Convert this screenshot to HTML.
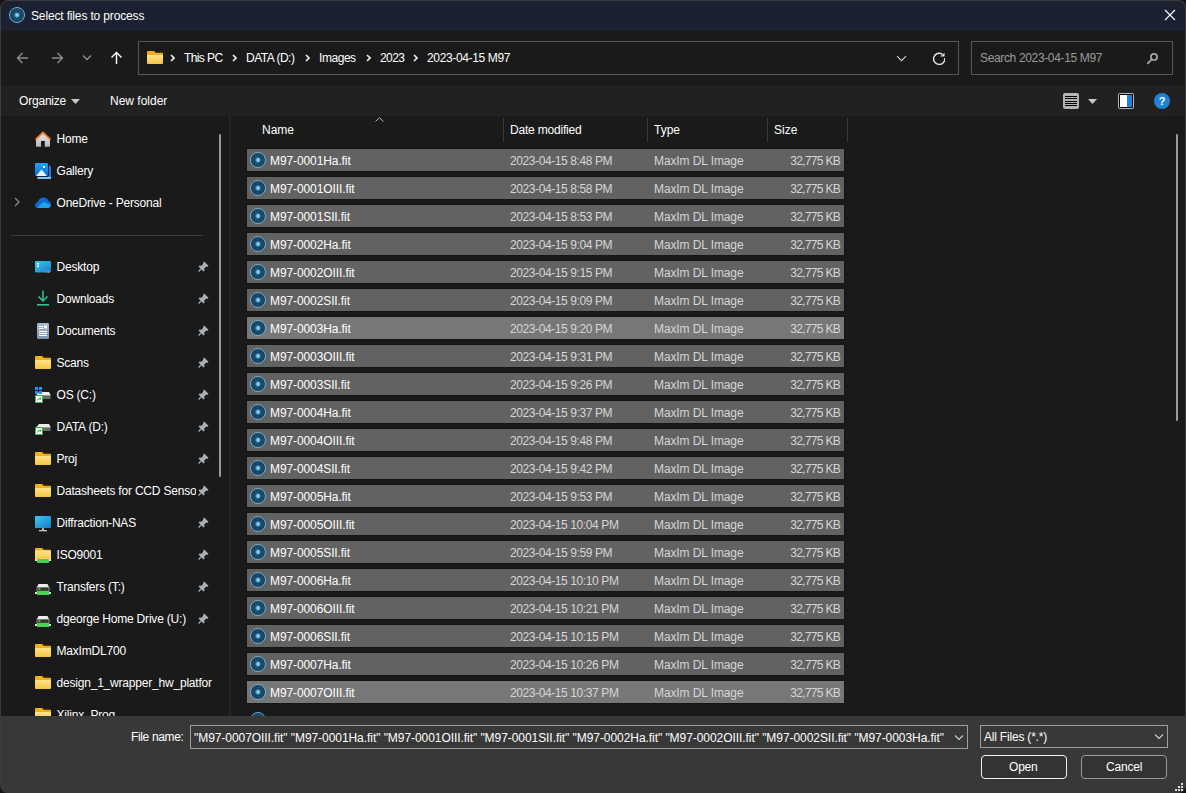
<!DOCTYPE html>
<html><head><meta charset="utf-8"><style>
html,body{margin:0;padding:0;}
body{width:1186px;height:793px;overflow:hidden;background:#141414;position:relative;font-family:"Liberation Sans", sans-serif;}
.r{position:absolute;}
.t{position:absolute;white-space:pre;line-height:normal;font-family:"Liberation Sans", sans-serif;}
#win{position:absolute;left:0;top:0;width:1186px;height:793px;border-radius:8px;overflow:hidden;background:#3c3c3c;}
</style></head><body>
<svg width="0" height="0" style="position:absolute"><defs>
<linearGradient id="fg" x1="0" y1="0" x2="0" y2="1"><stop offset="0" stop-color="#ffe58a"/><stop offset="1" stop-color="#f6c445"/></linearGradient>
<linearGradient id="dg" x1="0" y1="0" x2="1" y2="1"><stop offset="0" stop-color="#3cc8f0"/><stop offset="1" stop-color="#1a7ccc"/></linearGradient>
</defs></svg>
<div id="win">

<div class="r" style="left:1px;top:1px;width:1184px;height:30px;background:#1b2130;border-radius:7px 7px 0 0;"></div>
<div class="r" style="left:9px;top:7px;width:16px;height:16px;border-radius:50%;box-sizing:border-box;border:1.2px solid #6ab4dc;background:radial-gradient(circle at 50% 50%, #a8e4ff 0, #80ccf2 1.1px, #3a86b4 2.2px, #1a4966 3.3px, #173f5a 4.3px, #235677 5.1px, #153951 6.2px);"></div>
<div class="t" style="left:31px;top:9px;color:#ffffff;font-size:12px;letter-spacing:-0.15px;">Select files to process</div>
<svg class="r" style="left:1164px;top:9px" width="12" height="12" viewBox="0 0 12 12"><path d="M1 1L11 11M11 1L1 11" stroke="#ffffff" stroke-width="1.1"/></svg>
<div class="r" style="left:1px;top:31px;width:1184px;height:55px;background:#1a1a1a;"></div>
<svg class="r" style="left:16px;top:52px" width="13" height="12" viewBox="0 0 13 12"><path d="M12 6H1.5M6.5 1L1.5 6L6.5 11" stroke="#8f8f8f" stroke-width="1.4" fill="none"/></svg>
<svg class="r" style="left:51px;top:52px" width="13" height="12" viewBox="0 0 13 12"><path d="M1 6H11.5M6.5 1L11.5 6L6.5 11" stroke="#8f8f8f" stroke-width="1.4" fill="none"/></svg>
<svg class="r" style="left:82px;top:54px" width="11" height="7" viewBox="0 0 11 7"><path d="M1 1.5L5 5.5L9 1.5" stroke="#8f8f8f" stroke-width="1.4" fill="none"/></svg>
<svg class="r" style="left:110px;top:51px" width="13" height="13" viewBox="0 0 13 13"><path d="M6.5 13V1.5M1.5 6.5L6.5 1.5L11.5 6.5" stroke="#ffffff" stroke-width="1.4" fill="none"/></svg>
<div class="r" style="left:138px;top:41px;width:821px;height:34px;background:#1a1a1a;box-sizing:border-box;border:1px solid #575757;"></div>
<svg class="r" style="left:147px;top:50px" width="16" height="14" viewBox="0 0 16 14"><path d="M0 2 Q0 1 1 1 H7.2 L8.6 2.7 H15 Q16 2.7 16 3.7 V7 H0 Z" fill="#efb01a"/><rect x="0" y="5" width="16" height="9" rx="1" fill="url(#fg)"/></svg>
<svg class="r" style="left:170px;top:54px" width="5" height="8" viewBox="0 0 5 8"><path d="M1 1L4 4L1 7" stroke="#f0f0f0" stroke-width="1.6" fill="none"/></svg>
<svg class="r" style="left:232px;top:54px" width="5" height="8" viewBox="0 0 5 8"><path d="M1 1L4 4L1 7" stroke="#f0f0f0" stroke-width="1.6" fill="none"/></svg>
<svg class="r" style="left:305px;top:54px" width="5" height="8" viewBox="0 0 5 8"><path d="M1 1L4 4L1 7" stroke="#f0f0f0" stroke-width="1.6" fill="none"/></svg>
<svg class="r" style="left:366px;top:54px" width="5" height="8" viewBox="0 0 5 8"><path d="M1 1L4 4L1 7" stroke="#f0f0f0" stroke-width="1.6" fill="none"/></svg>
<svg class="r" style="left:413px;top:54px" width="5" height="8" viewBox="0 0 5 8"><path d="M1 1L4 4L1 7" stroke="#f0f0f0" stroke-width="1.6" fill="none"/></svg>
<div class="t" style="left:184px;top:51px;color:#ffffff;font-size:12px;letter-spacing:-0.6px;">This PC</div>
<div class="t" style="left:246px;top:51px;color:#ffffff;font-size:12px;letter-spacing:-0.5px;">DATA (D:)</div>
<div class="t" style="left:319px;top:51px;color:#ffffff;font-size:12px;letter-spacing:-0.45px;">Images</div>
<div class="t" style="left:380px;top:51px;color:#ffffff;font-size:12px;letter-spacing:-0.6px;">2023</div>
<div class="t" style="left:427px;top:51px;color:#ffffff;font-size:12px;letter-spacing:-0.35px;">2023-04-15 M97</div>
<svg class="r" style="left:896px;top:55px" width="11" height="7" viewBox="0 0 11 7"><path d="M1 1.2L5.5 5.7L10 1.2" stroke="#d0d0d0" stroke-width="1.1" fill="none"/></svg>
<svg class="r" style="left:932px;top:52px" width="13" height="13" viewBox="0 0 13 13"><path d="M10.17 2.05A5.6 5.6 0 1 0 12.75 6.02" stroke="#e6e6e6" stroke-width="1.4" fill="none"/><path d="M8.1 4.5L12.5 0.7L12.5 4.5Z" fill="#e6e6e6"/></svg>
<div class="r" style="left:971px;top:41px;width:202px;height:34px;background:#1a1a1a;box-sizing:border-box;border:1px solid #575757;"></div>
<div class="t" style="left:980px;top:51px;color:#9a9a9a;font-size:12px;letter-spacing:-0.35px;">Search 2023-04-15 M97</div>
<svg class="r" style="left:1145px;top:51px" width="14" height="14" viewBox="0 0 14 14"><circle cx="9" cy="5.9" r="3.1" stroke="#a6a6a6" stroke-width="1.7" fill="none"/><path d="M7 8.1L2.3 12.8" stroke="#a6a6a6" stroke-width="1.8"/></svg>
<div class="r" style="left:1px;top:86px;width:1184px;height:30px;background:#212121;"></div>
<div class="t" style="left:19px;top:94px;color:#ffffff;font-size:12px;letter-spacing:-0.2px;">Organize</div>
<svg class="r" style="left:71px;top:99px" width="9" height="5" viewBox="0 0 9 5"><path d="M0 0H9L4.5 5Z" fill="#c8c8c8"/></svg>
<div class="t" style="left:110px;top:94px;color:#ffffff;font-size:12px;letter-spacing:0px;">New folder</div>
<svg class="r" style="left:1063px;top:93px" width="16" height="16" viewBox="0 0 16 16"><rect x="0" y="0" width="16" height="16" rx="2" fill="#b4b4b4"/><rect x="2" y="3" width="12" height="1" fill="#000"/><rect x="2" y="5" width="12" height="1" fill="#000"/><rect x="2" y="8" width="12" height="1" fill="#000"/><rect x="2" y="10" width="12" height="1" fill="#000"/><rect x="2" y="12" width="12" height="1" fill="#000"/></svg>
<svg class="r" style="left:1088px;top:99px" width="9" height="5" viewBox="0 0 9 5"><path d="M0 0H9L4.5 5Z" fill="#c8c8c8"/></svg>
<svg class="r" style="left:1118px;top:93px" width="16" height="16" viewBox="0 0 16 16"><rect x="0" y="0" width="16" height="16" rx="2" fill="#b4b4b4"/><rect x="1" y="1" width="14" height="14" rx="1" fill="#000"/><rect x="2" y="2" width="7" height="12" fill="#fff"/><rect x="9" y="2" width="5" height="12" fill="#1a86e0"/></svg>
<svg class="r" style="left:1154px;top:93px" width="16" height="16" viewBox="0 0 16 16"><circle cx="8" cy="8" r="8" fill="#1d82d8"/><text x="8" y="12.2" text-anchor="middle" font-family="Liberation Sans" font-weight="bold" font-size="11" fill="#fff">?</text></svg>
<div class="r" style="left:1px;top:116px;width:1184px;height:600px;background:#1a1a1a;"></div>
<div class="r" style="left:229px;top:116px;width:2px;height:600px;background:#262626;"></div>
<div class="r" style="left:1168px;top:116px;width:17px;height:600px;background:#191919;"></div>
<div class="r" style="left:1px;top:116px;width:216px;height:600px;overflow:hidden">
<div class="t" style="left:55.5px;top:16px;color:#ffffff;font-size:12px;letter-spacing:-0.2px;">Home</div>
<div class="t" style="left:55.5px;top:48px;color:#ffffff;font-size:12px;letter-spacing:-0.2px;">Gallery</div>
<div class="t" style="left:55.5px;top:80px;color:#ffffff;font-size:12px;letter-spacing:-0.2px;">OneDrive - Personal</div>
<div class="t" style="left:55.5px;top:144px;color:#ffffff;font-size:12px;letter-spacing:-0.2px;">Desktop</div>
<div class="t" style="left:55.5px;top:176px;color:#ffffff;font-size:12px;letter-spacing:-0.2px;">Downloads</div>
<div class="t" style="left:55.5px;top:208px;color:#ffffff;font-size:12px;letter-spacing:-0.2px;">Documents</div>
<div class="t" style="left:55.5px;top:240px;color:#ffffff;font-size:12px;letter-spacing:-0.2px;">Scans</div>
<div class="t" style="left:55.5px;top:272px;color:#ffffff;font-size:12px;letter-spacing:-0.2px;">OS (C:)</div>
<div class="t" style="left:55.5px;top:304px;color:#ffffff;font-size:12px;letter-spacing:-0.2px;">DATA (D:)</div>
<div class="t" style="left:55.5px;top:336px;color:#ffffff;font-size:12px;letter-spacing:-0.2px;">Proj</div>
<div class="t" style="left:55.5px;top:368px;color:#ffffff;font-size:12px;letter-spacing:-0.2px;max-width:139px;overflow:hidden;">Datasheets for CCD Sensor</div>
<div class="t" style="left:55.5px;top:400px;color:#ffffff;font-size:12px;letter-spacing:-0.2px;">Diffraction-NAS</div>
<div class="t" style="left:55.5px;top:432px;color:#ffffff;font-size:12px;letter-spacing:-0.2px;">ISO9001</div>
<div class="t" style="left:55.5px;top:464px;color:#ffffff;font-size:12px;letter-spacing:-0.2px;">Transfers (T:)</div>
<div class="t" style="left:55.5px;top:496px;color:#ffffff;font-size:12px;letter-spacing:-0.2px;">dgeorge Home Drive (U:)</div>
<div class="t" style="left:55.5px;top:528px;color:#ffffff;font-size:12px;letter-spacing:-0.2px;">MaxImDL700</div>
<div class="t" style="left:55.5px;top:560px;color:#ffffff;font-size:12px;letter-spacing:-0.2px;">design_1_wrapper_hw_platfor</div>
<div class="t" style="left:55.5px;top:592px;color:#ffffff;font-size:12px;letter-spacing:-0.2px;">Xilinx_Prog</div>
</div>
<div class="r" style="left:11px;top:235px;width:192px;height:1px;background:#3a3a3a;"></div>
<div class="r" style="left:219px;top:134px;width:2px;height:343px;background:#9a9a9a;border-radius:1px;"></div>
<svg class="r" style="left:14px;top:197px" width="6" height="10" viewBox="0 0 6 10"><path d="M1 1L5 5L1 9" stroke="#8a8a8a" stroke-width="1.2" fill="none"/></svg>
<svg class="r" style="left:198px;top:261px" width="11" height="11" viewBox="0 0 11 11"><path d="M6.2 0.5L10.5 4.8L9.3 6L8.2 5.6L6.2 7.6L6.6 9.6L5.5 10.5L0.5 5.5L1.4 4.4L3.4 4.8L5.4 2.8L5 1.7Z" fill="#a9b1b6"/><path d="M3 8L0.5 10.5" stroke="#a9b1b6" stroke-width="1.3"/></svg>
<svg class="r" style="left:198px;top:293px" width="11" height="11" viewBox="0 0 11 11"><path d="M6.2 0.5L10.5 4.8L9.3 6L8.2 5.6L6.2 7.6L6.6 9.6L5.5 10.5L0.5 5.5L1.4 4.4L3.4 4.8L5.4 2.8L5 1.7Z" fill="#a9b1b6"/><path d="M3 8L0.5 10.5" stroke="#a9b1b6" stroke-width="1.3"/></svg>
<svg class="r" style="left:198px;top:325px" width="11" height="11" viewBox="0 0 11 11"><path d="M6.2 0.5L10.5 4.8L9.3 6L8.2 5.6L6.2 7.6L6.6 9.6L5.5 10.5L0.5 5.5L1.4 4.4L3.4 4.8L5.4 2.8L5 1.7Z" fill="#a9b1b6"/><path d="M3 8L0.5 10.5" stroke="#a9b1b6" stroke-width="1.3"/></svg>
<svg class="r" style="left:198px;top:357px" width="11" height="11" viewBox="0 0 11 11"><path d="M6.2 0.5L10.5 4.8L9.3 6L8.2 5.6L6.2 7.6L6.6 9.6L5.5 10.5L0.5 5.5L1.4 4.4L3.4 4.8L5.4 2.8L5 1.7Z" fill="#a9b1b6"/><path d="M3 8L0.5 10.5" stroke="#a9b1b6" stroke-width="1.3"/></svg>
<svg class="r" style="left:198px;top:389px" width="11" height="11" viewBox="0 0 11 11"><path d="M6.2 0.5L10.5 4.8L9.3 6L8.2 5.6L6.2 7.6L6.6 9.6L5.5 10.5L0.5 5.5L1.4 4.4L3.4 4.8L5.4 2.8L5 1.7Z" fill="#a9b1b6"/><path d="M3 8L0.5 10.5" stroke="#a9b1b6" stroke-width="1.3"/></svg>
<svg class="r" style="left:198px;top:421px" width="11" height="11" viewBox="0 0 11 11"><path d="M6.2 0.5L10.5 4.8L9.3 6L8.2 5.6L6.2 7.6L6.6 9.6L5.5 10.5L0.5 5.5L1.4 4.4L3.4 4.8L5.4 2.8L5 1.7Z" fill="#a9b1b6"/><path d="M3 8L0.5 10.5" stroke="#a9b1b6" stroke-width="1.3"/></svg>
<svg class="r" style="left:198px;top:453px" width="11" height="11" viewBox="0 0 11 11"><path d="M6.2 0.5L10.5 4.8L9.3 6L8.2 5.6L6.2 7.6L6.6 9.6L5.5 10.5L0.5 5.5L1.4 4.4L3.4 4.8L5.4 2.8L5 1.7Z" fill="#a9b1b6"/><path d="M3 8L0.5 10.5" stroke="#a9b1b6" stroke-width="1.3"/></svg>
<svg class="r" style="left:198px;top:485px" width="11" height="11" viewBox="0 0 11 11"><path d="M6.2 0.5L10.5 4.8L9.3 6L8.2 5.6L6.2 7.6L6.6 9.6L5.5 10.5L0.5 5.5L1.4 4.4L3.4 4.8L5.4 2.8L5 1.7Z" fill="#a9b1b6"/><path d="M3 8L0.5 10.5" stroke="#a9b1b6" stroke-width="1.3"/></svg>
<svg class="r" style="left:198px;top:517px" width="11" height="11" viewBox="0 0 11 11"><path d="M6.2 0.5L10.5 4.8L9.3 6L8.2 5.6L6.2 7.6L6.6 9.6L5.5 10.5L0.5 5.5L1.4 4.4L3.4 4.8L5.4 2.8L5 1.7Z" fill="#a9b1b6"/><path d="M3 8L0.5 10.5" stroke="#a9b1b6" stroke-width="1.3"/></svg>
<svg class="r" style="left:198px;top:549px" width="11" height="11" viewBox="0 0 11 11"><path d="M6.2 0.5L10.5 4.8L9.3 6L8.2 5.6L6.2 7.6L6.6 9.6L5.5 10.5L0.5 5.5L1.4 4.4L3.4 4.8L5.4 2.8L5 1.7Z" fill="#a9b1b6"/><path d="M3 8L0.5 10.5" stroke="#a9b1b6" stroke-width="1.3"/></svg>
<svg class="r" style="left:198px;top:581px" width="11" height="11" viewBox="0 0 11 11"><path d="M6.2 0.5L10.5 4.8L9.3 6L8.2 5.6L6.2 7.6L6.6 9.6L5.5 10.5L0.5 5.5L1.4 4.4L3.4 4.8L5.4 2.8L5 1.7Z" fill="#a9b1b6"/><path d="M3 8L0.5 10.5" stroke="#a9b1b6" stroke-width="1.3"/></svg>
<svg class="r" style="left:198px;top:613px" width="11" height="11" viewBox="0 0 11 11"><path d="M6.2 0.5L10.5 4.8L9.3 6L8.2 5.6L6.2 7.6L6.6 9.6L5.5 10.5L0.5 5.5L1.4 4.4L3.4 4.8L5.4 2.8L5 1.7Z" fill="#a9b1b6"/><path d="M3 8L0.5 10.5" stroke="#a9b1b6" stroke-width="1.3"/></svg>
<svg class="r" style="left:35px;top:131px" width="16" height="16" viewBox="0 0 16 16"><defs><linearGradient id="hg" x1="0" y1="0" x2="0" y2="1"><stop offset="0" stop-color="#e6e6e6"/><stop offset="1" stop-color="#b9b9b9"/></linearGradient></defs><path d="M1 8 L8 1.5 L15 8 V14.8 Q15 15.8 14 15.8 H2 Q1 15.8 1 14.8 Z" fill="url(#hg)"/><rect x="6" y="10" width="3.8" height="6" fill="#1a1a1a"/><path d="M0.4 8.6 L8 1.4 L15.6 8.6" stroke="#f27812" stroke-width="1.7" fill="none"/></svg>
<svg class="r" style="left:35px;top:163px" width="17" height="17" viewBox="0 0 17 17"><defs><linearGradient id="gg" x1="0" y1="0" x2="0" y2="1"><stop offset="0" stop-color="#22a4f6"/><stop offset="1" stop-color="#0a6cd0"/></linearGradient></defs><rect x="2.5" y="2.5" width="13.5" height="13.5" rx="1.5" fill="#1a7ee0"/><rect x="2.5" y="14" width="13.5" height="2" fill="#86c4f2"/><rect x="-0.8" y="-0.8" width="14.6" height="14.6" rx="1.8" fill="#121212"/><rect x="0" y="0" width="13" height="13" rx="1.3" fill="url(#gg)"/><path d="M1 12.9 L6.5 6.6 L12 12.9 Z" fill="#e6f3ff"/><rect x="8" y="3" width="2" height="2" fill="#ffffff"/></svg>
<svg class="r" style="left:35px;top:197px" width="16" height="12" viewBox="0 0 16 12"><path d="M3 11 C1.3 11 0 9.8 0 8.2 C0 6.6 1.2 5.3 2.8 5.2 C3.4 2.4 5.8 0.5 8.5 0.5 C10.8 0.5 12.7 1.9 13.4 4 C15 4.5 16 5.9 16 7.5 C16 9.5 14.5 11 12.7 11 Z" fill="#0e6cd0"/><path d="M2.2 11 L7.3 5.8 Q9.6 4.6 11.8 6.2 L15.9 8.6 Q15.4 11 12.7 11 Z" fill="#22a2ee"/></svg>
<svg class="r" style="left:35px;top:261px" width="17" height="13" viewBox="0 0 17 13"><rect x="0" y="0" width="16" height="11.5" rx="1.2" fill="url(#dg)"/><rect x="2" y="2" width="2" height="1.5" fill="#fff"/><rect x="2" y="4.5" width="2" height="1.5" fill="#fff"/><rect x="11" y="10.5" width="1" height="1" fill="#cde"/><rect x="13" y="10.5" width="1" height="1" fill="#cde"/></svg>
<svg class="r" style="left:35px;top:290px" width="16" height="16" viewBox="0 0 16 16"><path d="M8 0.5V11M3.5 6.5L8 11L12.5 6.5" stroke="#2fc49a" stroke-width="1.5" fill="none"/><rect x="2" y="14" width="12" height="1.6" fill="#2fc49a"/></svg>
<svg class="r" style="left:35px;top:323px" width="16" height="16" viewBox="0 0 16 16"><defs><linearGradient id="docg" x1="0" y1="0" x2="0" y2="1"><stop offset="0" stop-color="#a9bdd0"/><stop offset="1" stop-color="#7c92a8"/></linearGradient></defs><rect x="2" y="0" width="12" height="16" rx="1.3" fill="url(#docg)"/><rect x="4" y="3" width="4" height="1" fill="#fff"/><rect x="4" y="5" width="4" height="1" fill="#fff"/><rect x="9" y="2.5" width="3" height="3" fill="#fff"/><rect x="4" y="8" width="8" height="1" fill="#fff"/><rect x="4" y="10" width="8" height="1" fill="#fff"/><rect x="4" y="12" width="8" height="1" fill="#fff"/></svg>
<svg class="r" style="left:35px;top:355px" width="16" height="14" viewBox="0 0 16 14"><path d="M0 2 Q0 1 1 1 H7.2 L8.6 2.7 H15 Q16 2.7 16 3.7 V7 H0 Z" fill="#efb01a"/><rect x="0" y="5" width="16" height="9" rx="1" fill="url(#fg)"/></svg>
<svg class="r" style="left:35px;top:451px" width="16" height="14" viewBox="0 0 16 14"><path d="M0 2 Q0 1 1 1 H7.2 L8.6 2.7 H15 Q16 2.7 16 3.7 V7 H0 Z" fill="#efb01a"/><rect x="0" y="5" width="16" height="9" rx="1" fill="url(#fg)"/></svg>
<svg class="r" style="left:35px;top:483px" width="16" height="14" viewBox="0 0 16 14"><path d="M0 2 Q0 1 1 1 H7.2 L8.6 2.7 H15 Q16 2.7 16 3.7 V7 H0 Z" fill="#efb01a"/><rect x="0" y="5" width="16" height="9" rx="1" fill="url(#fg)"/></svg>
<svg class="r" style="left:35px;top:643px" width="16" height="14" viewBox="0 0 16 14"><path d="M0 2 Q0 1 1 1 H7.2 L8.6 2.7 H15 Q16 2.7 16 3.7 V7 H0 Z" fill="#efb01a"/><rect x="0" y="5" width="16" height="9" rx="1" fill="url(#fg)"/></svg>
<svg class="r" style="left:35px;top:675px" width="16" height="14" viewBox="0 0 16 14"><path d="M0 2 Q0 1 1 1 H7.2 L8.6 2.7 H15 Q16 2.7 16 3.7 V7 H0 Z" fill="#efb01a"/><rect x="0" y="5" width="16" height="9" rx="1" fill="url(#fg)"/></svg>
<svg class="r" style="left:35px;top:707px" width="16" height="14" viewBox="0 0 16 14"><path d="M0 2 Q0 1 1 1 H7.2 L8.6 2.7 H15 Q16 2.7 16 3.7 V7 H0 Z" fill="#efb01a"/><rect x="0" y="5" width="16" height="9" rx="1" fill="url(#fg)"/></svg>
<svg class="r" style="left:35px;top:547px" width="16" height="16" viewBox="0 0 16 16"><path d="M0 2 Q0 1 1 1 H7.2 L8.6 2.7 H15 Q16 2.7 16 3.7 V7 H0 Z" fill="#efb01a"/><rect x="0" y="3.5" width="16" height="10.5" rx="1" fill="url(#fg)"/><rect x="0" y="12" width="16" height="2" fill="#e8e8e8"/><rect x="2" y="12" width="12" height="4" rx="0.6" fill="#44d052"/></svg>
<svg class="r" style="left:34px;top:386px" width="18" height="18" viewBox="0 0 18 18"><path d="M2.5 9 L5 6 H15 L16.5 9 Z" fill="#eeeeee"/><rect x="2.5" y="9" width="14" height="4" fill="#6a6a6a"/><rect x="2.5" y="9" width="14" height="1" fill="#9a9a9a"/><rect x="1" y="1" width="3" height="3" fill="#1a9af5"/><rect x="5" y="1" width="3" height="3" fill="#1a9af5"/><rect x="1" y="5" width="3" height="3" fill="#1a9af5"/><rect x="5" y="5" width="3" height="3" fill="#1a9af5"/><rect x="1" y="9" width="8" height="8" fill="#33b443"/><rect x="2" y="10" width="6" height="6" fill="#ffffff"/><path d="M3 15 Q3.2 12.2 6 12 V11 L7.6 12.6 L6 14.2 V13.2 Q4 13.3 3 15Z" fill="#33b443"/></svg>
<svg class="r" style="left:34px;top:418px" width="18" height="18" viewBox="0 0 18 18"><path d="M2.5 9 L5 6 H15 L16.5 9 Z" fill="#eeeeee"/><rect x="2.5" y="9" width="14" height="4" fill="#6a6a6a"/><rect x="2.5" y="9" width="14" height="1" fill="#9a9a9a"/><rect x="1" y="9" width="8" height="8" fill="#33b443"/><rect x="2" y="10" width="6" height="6" fill="#ffffff"/><path d="M3 15 Q3.2 12.2 6 12 V11 L7.6 12.6 L6 14.2 V13.2 Q4 13.3 3 15Z" fill="#33b443"/></svg>
<svg class="r" style="left:35px;top:516px" width="16" height="16" viewBox="0 0 16 16"><rect x="0" y="0" width="16" height="12" rx="0.8" fill="url(#dg)"/><rect x="7" y="12" width="2" height="2" fill="#b8b8b8"/><rect x="4" y="14" width="8" height="1.3" fill="#c8c8c8"/></svg>
<svg class="r" style="left:35px;top:583px" width="16" height="13" viewBox="0 0 16 13"><path d="M2 4 L3.5 1 H12.5 L14 4 Z" fill="#eeeeee"/><rect x="1.5" y="4" width="13" height="4.5" fill="#a0a0a0"/><rect x="2.3" y="4.6" width="11.4" height="3.2" fill="#353535"/><circle cx="4.5" cy="5.8" r="0.9" fill="#44ff44"/><rect x="0" y="9" width="16" height="2" fill="#dddddd"/><rect x="2" y="8" width="12" height="4" fill="#46d454"/></svg>
<svg class="r" style="left:35px;top:615px" width="16" height="13" viewBox="0 0 16 13"><path d="M2 4 L3.5 1 H12.5 L14 4 Z" fill="#eeeeee"/><rect x="1.5" y="4" width="13" height="4.5" fill="#a0a0a0"/><rect x="2.3" y="4.6" width="11.4" height="3.2" fill="#353535"/><circle cx="4.5" cy="5.8" r="0.9" fill="#44ff44"/><rect x="0" y="9" width="16" height="2" fill="#dddddd"/><rect x="2" y="8" width="12" height="4" fill="#46d454"/></svg>
<svg class="r" style="left:375px;top:117px" width="9" height="5" viewBox="0 0 9 5"><path d="M0.5 4.5L4.5 0.8L8.5 4.5" stroke="#bdbdbd" stroke-width="1" fill="none"/></svg>
<div class="r" style="left:503px;top:118px;width:1px;height:24px;background:#3a3a3a;"></div>
<div class="r" style="left:647px;top:118px;width:1px;height:24px;background:#3a3a3a;"></div>
<div class="r" style="left:767px;top:118px;width:1px;height:24px;background:#3a3a3a;"></div>
<div class="r" style="left:847px;top:118px;width:1px;height:24px;background:#3a3a3a;"></div>
<div class="t" style="left:262px;top:123px;color:#ffffff;font-size:12px;letter-spacing:0px;">Name</div>
<div class="t" style="left:510px;top:123px;color:#ffffff;font-size:12px;letter-spacing:-0.2px;">Date modified</div>
<div class="t" style="left:654px;top:123px;color:#ffffff;font-size:12px;letter-spacing:0px;">Type</div>
<div class="t" style="left:774px;top:123px;color:#ffffff;font-size:12px;letter-spacing:0px;">Size</div>
<div class="r" style="left:231px;top:116px;width:954px;height:600px;overflow:hidden">
<div class="r" style="left:16px;top:33px;width:597px;height:22px;background:#626262;box-shadow:0 0 0 1px #151515;"></div>
<div class="r" style="left:19px;top:36px;width:16px;height:16px;border-radius:50%;box-sizing:border-box;border:1.2px solid #6ab4dc;background:radial-gradient(circle at 50% 50%, #a8e4ff 0, #80ccf2 1.1px, #3a86b4 2.2px, #1a4966 3.3px, #173f5a 4.3px, #235677 5.1px, #153951 6.2px);"></div>
<div class="t" style="left:39px;top:38px;color:#ffffff;font-size:12px;letter-spacing:-0.1px;">M97-0001Ha.fit</div>
<div class="t" style="left:279px;top:38px;color:#d6d6d6;font-size:12px;letter-spacing:-0.4px;">2023-04-15 8:48 PM</div>
<div class="t" style="left:423px;top:38px;color:#d6d6d6;font-size:12px;letter-spacing:-0.1px;">MaxIm DL Image</div>
<div class="t" style="left:469px;top:38px;width:140px;text-align:right;color:#d6d6d6;font-size:12px;letter-spacing:-0.7px">32,775 KB</div>
<div class="r" style="left:16px;top:61px;width:597px;height:22px;background:#626262;box-shadow:0 0 0 1px #151515;"></div>
<div class="r" style="left:19px;top:64px;width:16px;height:16px;border-radius:50%;box-sizing:border-box;border:1.2px solid #6ab4dc;background:radial-gradient(circle at 50% 50%, #a8e4ff 0, #80ccf2 1.1px, #3a86b4 2.2px, #1a4966 3.3px, #173f5a 4.3px, #235677 5.1px, #153951 6.2px);"></div>
<div class="t" style="left:39px;top:66px;color:#ffffff;font-size:12px;letter-spacing:-0.1px;">M97-0001OIII.fit</div>
<div class="t" style="left:279px;top:66px;color:#d6d6d6;font-size:12px;letter-spacing:-0.4px;">2023-04-15 8:58 PM</div>
<div class="t" style="left:423px;top:66px;color:#d6d6d6;font-size:12px;letter-spacing:-0.1px;">MaxIm DL Image</div>
<div class="t" style="left:469px;top:66px;width:140px;text-align:right;color:#d6d6d6;font-size:12px;letter-spacing:-0.7px">32,775 KB</div>
<div class="r" style="left:16px;top:89px;width:597px;height:22px;background:#626262;box-shadow:0 0 0 1px #151515;"></div>
<div class="r" style="left:19px;top:92px;width:16px;height:16px;border-radius:50%;box-sizing:border-box;border:1.2px solid #6ab4dc;background:radial-gradient(circle at 50% 50%, #a8e4ff 0, #80ccf2 1.1px, #3a86b4 2.2px, #1a4966 3.3px, #173f5a 4.3px, #235677 5.1px, #153951 6.2px);"></div>
<div class="t" style="left:39px;top:94px;color:#ffffff;font-size:12px;letter-spacing:-0.1px;">M97-0001SII.fit</div>
<div class="t" style="left:279px;top:94px;color:#d6d6d6;font-size:12px;letter-spacing:-0.4px;">2023-04-15 8:53 PM</div>
<div class="t" style="left:423px;top:94px;color:#d6d6d6;font-size:12px;letter-spacing:-0.1px;">MaxIm DL Image</div>
<div class="t" style="left:469px;top:94px;width:140px;text-align:right;color:#d6d6d6;font-size:12px;letter-spacing:-0.7px">32,775 KB</div>
<div class="r" style="left:16px;top:117px;width:597px;height:22px;background:#626262;box-shadow:0 0 0 1px #151515;"></div>
<div class="r" style="left:19px;top:120px;width:16px;height:16px;border-radius:50%;box-sizing:border-box;border:1.2px solid #6ab4dc;background:radial-gradient(circle at 50% 50%, #a8e4ff 0, #80ccf2 1.1px, #3a86b4 2.2px, #1a4966 3.3px, #173f5a 4.3px, #235677 5.1px, #153951 6.2px);"></div>
<div class="t" style="left:39px;top:122px;color:#ffffff;font-size:12px;letter-spacing:-0.1px;">M97-0002Ha.fit</div>
<div class="t" style="left:279px;top:122px;color:#d6d6d6;font-size:12px;letter-spacing:-0.4px;">2023-04-15 9:04 PM</div>
<div class="t" style="left:423px;top:122px;color:#d6d6d6;font-size:12px;letter-spacing:-0.1px;">MaxIm DL Image</div>
<div class="t" style="left:469px;top:122px;width:140px;text-align:right;color:#d6d6d6;font-size:12px;letter-spacing:-0.7px">32,775 KB</div>
<div class="r" style="left:16px;top:145px;width:597px;height:22px;background:#626262;box-shadow:0 0 0 1px #151515;"></div>
<div class="r" style="left:19px;top:148px;width:16px;height:16px;border-radius:50%;box-sizing:border-box;border:1.2px solid #6ab4dc;background:radial-gradient(circle at 50% 50%, #a8e4ff 0, #80ccf2 1.1px, #3a86b4 2.2px, #1a4966 3.3px, #173f5a 4.3px, #235677 5.1px, #153951 6.2px);"></div>
<div class="t" style="left:39px;top:150px;color:#ffffff;font-size:12px;letter-spacing:-0.1px;">M97-0002OIII.fit</div>
<div class="t" style="left:279px;top:150px;color:#d6d6d6;font-size:12px;letter-spacing:-0.4px;">2023-04-15 9:15 PM</div>
<div class="t" style="left:423px;top:150px;color:#d6d6d6;font-size:12px;letter-spacing:-0.1px;">MaxIm DL Image</div>
<div class="t" style="left:469px;top:150px;width:140px;text-align:right;color:#d6d6d6;font-size:12px;letter-spacing:-0.7px">32,775 KB</div>
<div class="r" style="left:16px;top:173px;width:597px;height:22px;background:#626262;box-shadow:0 0 0 1px #151515;"></div>
<div class="r" style="left:19px;top:176px;width:16px;height:16px;border-radius:50%;box-sizing:border-box;border:1.2px solid #6ab4dc;background:radial-gradient(circle at 50% 50%, #a8e4ff 0, #80ccf2 1.1px, #3a86b4 2.2px, #1a4966 3.3px, #173f5a 4.3px, #235677 5.1px, #153951 6.2px);"></div>
<div class="t" style="left:39px;top:178px;color:#ffffff;font-size:12px;letter-spacing:-0.1px;">M97-0002SII.fit</div>
<div class="t" style="left:279px;top:178px;color:#d6d6d6;font-size:12px;letter-spacing:-0.4px;">2023-04-15 9:09 PM</div>
<div class="t" style="left:423px;top:178px;color:#d6d6d6;font-size:12px;letter-spacing:-0.1px;">MaxIm DL Image</div>
<div class="t" style="left:469px;top:178px;width:140px;text-align:right;color:#d6d6d6;font-size:12px;letter-spacing:-0.7px">32,775 KB</div>
<div class="r" style="left:16px;top:201px;width:597px;height:22px;background:#777777;box-shadow:0 0 0 1px #151515;"></div>
<div class="r" style="left:19px;top:204px;width:16px;height:16px;border-radius:50%;box-sizing:border-box;border:1.2px solid #6ab4dc;background:radial-gradient(circle at 50% 50%, #a8e4ff 0, #80ccf2 1.1px, #3a86b4 2.2px, #1a4966 3.3px, #173f5a 4.3px, #235677 5.1px, #153951 6.2px);"></div>
<div class="t" style="left:39px;top:206px;color:#ffffff;font-size:12px;letter-spacing:-0.1px;">M97-0003Ha.fit</div>
<div class="t" style="left:279px;top:206px;color:#d6d6d6;font-size:12px;letter-spacing:-0.4px;">2023-04-15 9:20 PM</div>
<div class="t" style="left:423px;top:206px;color:#d6d6d6;font-size:12px;letter-spacing:-0.1px;">MaxIm DL Image</div>
<div class="t" style="left:469px;top:206px;width:140px;text-align:right;color:#d6d6d6;font-size:12px;letter-spacing:-0.7px">32,775 KB</div>
<div class="r" style="left:16px;top:229px;width:597px;height:22px;background:#626262;box-shadow:0 0 0 1px #151515;"></div>
<div class="r" style="left:19px;top:232px;width:16px;height:16px;border-radius:50%;box-sizing:border-box;border:1.2px solid #6ab4dc;background:radial-gradient(circle at 50% 50%, #a8e4ff 0, #80ccf2 1.1px, #3a86b4 2.2px, #1a4966 3.3px, #173f5a 4.3px, #235677 5.1px, #153951 6.2px);"></div>
<div class="t" style="left:39px;top:234px;color:#ffffff;font-size:12px;letter-spacing:-0.1px;">M97-0003OIII.fit</div>
<div class="t" style="left:279px;top:234px;color:#d6d6d6;font-size:12px;letter-spacing:-0.4px;">2023-04-15 9:31 PM</div>
<div class="t" style="left:423px;top:234px;color:#d6d6d6;font-size:12px;letter-spacing:-0.1px;">MaxIm DL Image</div>
<div class="t" style="left:469px;top:234px;width:140px;text-align:right;color:#d6d6d6;font-size:12px;letter-spacing:-0.7px">32,775 KB</div>
<div class="r" style="left:16px;top:257px;width:597px;height:22px;background:#626262;box-shadow:0 0 0 1px #151515;"></div>
<div class="r" style="left:19px;top:260px;width:16px;height:16px;border-radius:50%;box-sizing:border-box;border:1.2px solid #6ab4dc;background:radial-gradient(circle at 50% 50%, #a8e4ff 0, #80ccf2 1.1px, #3a86b4 2.2px, #1a4966 3.3px, #173f5a 4.3px, #235677 5.1px, #153951 6.2px);"></div>
<div class="t" style="left:39px;top:262px;color:#ffffff;font-size:12px;letter-spacing:-0.1px;">M97-0003SII.fit</div>
<div class="t" style="left:279px;top:262px;color:#d6d6d6;font-size:12px;letter-spacing:-0.4px;">2023-04-15 9:26 PM</div>
<div class="t" style="left:423px;top:262px;color:#d6d6d6;font-size:12px;letter-spacing:-0.1px;">MaxIm DL Image</div>
<div class="t" style="left:469px;top:262px;width:140px;text-align:right;color:#d6d6d6;font-size:12px;letter-spacing:-0.7px">32,775 KB</div>
<div class="r" style="left:16px;top:285px;width:597px;height:22px;background:#626262;box-shadow:0 0 0 1px #151515;"></div>
<div class="r" style="left:19px;top:288px;width:16px;height:16px;border-radius:50%;box-sizing:border-box;border:1.2px solid #6ab4dc;background:radial-gradient(circle at 50% 50%, #a8e4ff 0, #80ccf2 1.1px, #3a86b4 2.2px, #1a4966 3.3px, #173f5a 4.3px, #235677 5.1px, #153951 6.2px);"></div>
<div class="t" style="left:39px;top:290px;color:#ffffff;font-size:12px;letter-spacing:-0.1px;">M97-0004Ha.fit</div>
<div class="t" style="left:279px;top:290px;color:#d6d6d6;font-size:12px;letter-spacing:-0.4px;">2023-04-15 9:37 PM</div>
<div class="t" style="left:423px;top:290px;color:#d6d6d6;font-size:12px;letter-spacing:-0.1px;">MaxIm DL Image</div>
<div class="t" style="left:469px;top:290px;width:140px;text-align:right;color:#d6d6d6;font-size:12px;letter-spacing:-0.7px">32,775 KB</div>
<div class="r" style="left:16px;top:313px;width:597px;height:22px;background:#626262;box-shadow:0 0 0 1px #151515;"></div>
<div class="r" style="left:19px;top:316px;width:16px;height:16px;border-radius:50%;box-sizing:border-box;border:1.2px solid #6ab4dc;background:radial-gradient(circle at 50% 50%, #a8e4ff 0, #80ccf2 1.1px, #3a86b4 2.2px, #1a4966 3.3px, #173f5a 4.3px, #235677 5.1px, #153951 6.2px);"></div>
<div class="t" style="left:39px;top:318px;color:#ffffff;font-size:12px;letter-spacing:-0.1px;">M97-0004OIII.fit</div>
<div class="t" style="left:279px;top:318px;color:#d6d6d6;font-size:12px;letter-spacing:-0.4px;">2023-04-15 9:48 PM</div>
<div class="t" style="left:423px;top:318px;color:#d6d6d6;font-size:12px;letter-spacing:-0.1px;">MaxIm DL Image</div>
<div class="t" style="left:469px;top:318px;width:140px;text-align:right;color:#d6d6d6;font-size:12px;letter-spacing:-0.7px">32,775 KB</div>
<div class="r" style="left:16px;top:341px;width:597px;height:22px;background:#626262;box-shadow:0 0 0 1px #151515;"></div>
<div class="r" style="left:19px;top:344px;width:16px;height:16px;border-radius:50%;box-sizing:border-box;border:1.2px solid #6ab4dc;background:radial-gradient(circle at 50% 50%, #a8e4ff 0, #80ccf2 1.1px, #3a86b4 2.2px, #1a4966 3.3px, #173f5a 4.3px, #235677 5.1px, #153951 6.2px);"></div>
<div class="t" style="left:39px;top:346px;color:#ffffff;font-size:12px;letter-spacing:-0.1px;">M97-0004SII.fit</div>
<div class="t" style="left:279px;top:346px;color:#d6d6d6;font-size:12px;letter-spacing:-0.4px;">2023-04-15 9:42 PM</div>
<div class="t" style="left:423px;top:346px;color:#d6d6d6;font-size:12px;letter-spacing:-0.1px;">MaxIm DL Image</div>
<div class="t" style="left:469px;top:346px;width:140px;text-align:right;color:#d6d6d6;font-size:12px;letter-spacing:-0.7px">32,775 KB</div>
<div class="r" style="left:16px;top:369px;width:597px;height:22px;background:#626262;box-shadow:0 0 0 1px #151515;"></div>
<div class="r" style="left:19px;top:372px;width:16px;height:16px;border-radius:50%;box-sizing:border-box;border:1.2px solid #6ab4dc;background:radial-gradient(circle at 50% 50%, #a8e4ff 0, #80ccf2 1.1px, #3a86b4 2.2px, #1a4966 3.3px, #173f5a 4.3px, #235677 5.1px, #153951 6.2px);"></div>
<div class="t" style="left:39px;top:374px;color:#ffffff;font-size:12px;letter-spacing:-0.1px;">M97-0005Ha.fit</div>
<div class="t" style="left:279px;top:374px;color:#d6d6d6;font-size:12px;letter-spacing:-0.4px;">2023-04-15 9:53 PM</div>
<div class="t" style="left:423px;top:374px;color:#d6d6d6;font-size:12px;letter-spacing:-0.1px;">MaxIm DL Image</div>
<div class="t" style="left:469px;top:374px;width:140px;text-align:right;color:#d6d6d6;font-size:12px;letter-spacing:-0.7px">32,775 KB</div>
<div class="r" style="left:16px;top:397px;width:597px;height:22px;background:#626262;box-shadow:0 0 0 1px #151515;"></div>
<div class="r" style="left:19px;top:400px;width:16px;height:16px;border-radius:50%;box-sizing:border-box;border:1.2px solid #6ab4dc;background:radial-gradient(circle at 50% 50%, #a8e4ff 0, #80ccf2 1.1px, #3a86b4 2.2px, #1a4966 3.3px, #173f5a 4.3px, #235677 5.1px, #153951 6.2px);"></div>
<div class="t" style="left:39px;top:402px;color:#ffffff;font-size:12px;letter-spacing:-0.1px;">M97-0005OIII.fit</div>
<div class="t" style="left:279px;top:402px;color:#d6d6d6;font-size:12px;letter-spacing:-0.4px;">2023-04-15 10:04 PM</div>
<div class="t" style="left:423px;top:402px;color:#d6d6d6;font-size:12px;letter-spacing:-0.1px;">MaxIm DL Image</div>
<div class="t" style="left:469px;top:402px;width:140px;text-align:right;color:#d6d6d6;font-size:12px;letter-spacing:-0.7px">32,775 KB</div>
<div class="r" style="left:16px;top:425px;width:597px;height:22px;background:#626262;box-shadow:0 0 0 1px #151515;"></div>
<div class="r" style="left:19px;top:428px;width:16px;height:16px;border-radius:50%;box-sizing:border-box;border:1.2px solid #6ab4dc;background:radial-gradient(circle at 50% 50%, #a8e4ff 0, #80ccf2 1.1px, #3a86b4 2.2px, #1a4966 3.3px, #173f5a 4.3px, #235677 5.1px, #153951 6.2px);"></div>
<div class="t" style="left:39px;top:430px;color:#ffffff;font-size:12px;letter-spacing:-0.1px;">M97-0005SII.fit</div>
<div class="t" style="left:279px;top:430px;color:#d6d6d6;font-size:12px;letter-spacing:-0.4px;">2023-04-15 9:59 PM</div>
<div class="t" style="left:423px;top:430px;color:#d6d6d6;font-size:12px;letter-spacing:-0.1px;">MaxIm DL Image</div>
<div class="t" style="left:469px;top:430px;width:140px;text-align:right;color:#d6d6d6;font-size:12px;letter-spacing:-0.7px">32,775 KB</div>
<div class="r" style="left:16px;top:453px;width:597px;height:22px;background:#626262;box-shadow:0 0 0 1px #151515;"></div>
<div class="r" style="left:19px;top:456px;width:16px;height:16px;border-radius:50%;box-sizing:border-box;border:1.2px solid #6ab4dc;background:radial-gradient(circle at 50% 50%, #a8e4ff 0, #80ccf2 1.1px, #3a86b4 2.2px, #1a4966 3.3px, #173f5a 4.3px, #235677 5.1px, #153951 6.2px);"></div>
<div class="t" style="left:39px;top:458px;color:#ffffff;font-size:12px;letter-spacing:-0.1px;">M97-0006Ha.fit</div>
<div class="t" style="left:279px;top:458px;color:#d6d6d6;font-size:12px;letter-spacing:-0.4px;">2023-04-15 10:10 PM</div>
<div class="t" style="left:423px;top:458px;color:#d6d6d6;font-size:12px;letter-spacing:-0.1px;">MaxIm DL Image</div>
<div class="t" style="left:469px;top:458px;width:140px;text-align:right;color:#d6d6d6;font-size:12px;letter-spacing:-0.7px">32,775 KB</div>
<div class="r" style="left:16px;top:481px;width:597px;height:22px;background:#626262;box-shadow:0 0 0 1px #151515;"></div>
<div class="r" style="left:19px;top:484px;width:16px;height:16px;border-radius:50%;box-sizing:border-box;border:1.2px solid #6ab4dc;background:radial-gradient(circle at 50% 50%, #a8e4ff 0, #80ccf2 1.1px, #3a86b4 2.2px, #1a4966 3.3px, #173f5a 4.3px, #235677 5.1px, #153951 6.2px);"></div>
<div class="t" style="left:39px;top:486px;color:#ffffff;font-size:12px;letter-spacing:-0.1px;">M97-0006OIII.fit</div>
<div class="t" style="left:279px;top:486px;color:#d6d6d6;font-size:12px;letter-spacing:-0.4px;">2023-04-15 10:21 PM</div>
<div class="t" style="left:423px;top:486px;color:#d6d6d6;font-size:12px;letter-spacing:-0.1px;">MaxIm DL Image</div>
<div class="t" style="left:469px;top:486px;width:140px;text-align:right;color:#d6d6d6;font-size:12px;letter-spacing:-0.7px">32,775 KB</div>
<div class="r" style="left:16px;top:509px;width:597px;height:22px;background:#626262;box-shadow:0 0 0 1px #151515;"></div>
<div class="r" style="left:19px;top:512px;width:16px;height:16px;border-radius:50%;box-sizing:border-box;border:1.2px solid #6ab4dc;background:radial-gradient(circle at 50% 50%, #a8e4ff 0, #80ccf2 1.1px, #3a86b4 2.2px, #1a4966 3.3px, #173f5a 4.3px, #235677 5.1px, #153951 6.2px);"></div>
<div class="t" style="left:39px;top:514px;color:#ffffff;font-size:12px;letter-spacing:-0.1px;">M97-0006SII.fit</div>
<div class="t" style="left:279px;top:514px;color:#d6d6d6;font-size:12px;letter-spacing:-0.4px;">2023-04-15 10:15 PM</div>
<div class="t" style="left:423px;top:514px;color:#d6d6d6;font-size:12px;letter-spacing:-0.1px;">MaxIm DL Image</div>
<div class="t" style="left:469px;top:514px;width:140px;text-align:right;color:#d6d6d6;font-size:12px;letter-spacing:-0.7px">32,775 KB</div>
<div class="r" style="left:16px;top:537px;width:597px;height:22px;background:#626262;box-shadow:0 0 0 1px #151515;"></div>
<div class="r" style="left:19px;top:540px;width:16px;height:16px;border-radius:50%;box-sizing:border-box;border:1.2px solid #6ab4dc;background:radial-gradient(circle at 50% 50%, #a8e4ff 0, #80ccf2 1.1px, #3a86b4 2.2px, #1a4966 3.3px, #173f5a 4.3px, #235677 5.1px, #153951 6.2px);"></div>
<div class="t" style="left:39px;top:542px;color:#ffffff;font-size:12px;letter-spacing:-0.1px;">M97-0007Ha.fit</div>
<div class="t" style="left:279px;top:542px;color:#d6d6d6;font-size:12px;letter-spacing:-0.4px;">2023-04-15 10:26 PM</div>
<div class="t" style="left:423px;top:542px;color:#d6d6d6;font-size:12px;letter-spacing:-0.1px;">MaxIm DL Image</div>
<div class="t" style="left:469px;top:542px;width:140px;text-align:right;color:#d6d6d6;font-size:12px;letter-spacing:-0.7px">32,775 KB</div>
<div class="r" style="left:16px;top:565px;width:597px;height:22px;background:#777777;box-shadow:0 0 0 1px #151515;"></div>
<div class="r" style="left:19px;top:568px;width:16px;height:16px;border-radius:50%;box-sizing:border-box;border:1.2px solid #6ab4dc;background:radial-gradient(circle at 50% 50%, #a8e4ff 0, #80ccf2 1.1px, #3a86b4 2.2px, #1a4966 3.3px, #173f5a 4.3px, #235677 5.1px, #153951 6.2px);"></div>
<div class="t" style="left:39px;top:570px;color:#ffffff;font-size:12px;letter-spacing:-0.1px;">M97-0007OIII.fit</div>
<div class="t" style="left:279px;top:570px;color:#d6d6d6;font-size:12px;letter-spacing:-0.4px;">2023-04-15 10:37 PM</div>
<div class="t" style="left:423px;top:570px;color:#d6d6d6;font-size:12px;letter-spacing:-0.1px;">MaxIm DL Image</div>
<div class="t" style="left:469px;top:570px;width:140px;text-align:right;color:#d6d6d6;font-size:12px;letter-spacing:-0.7px">32,775 KB</div>
<div class="r" style="left:19px;top:596px;width:16px;height:16px;border-radius:50%;box-sizing:border-box;border:1.2px solid #6ab4dc;background:radial-gradient(circle at 50% 50%, #a8e4ff 0, #80ccf2 1.1px, #3a86b4 2.2px, #1a4966 3.3px, #173f5a 4.3px, #235677 5.1px, #153951 6.2px);"></div>
</div>
<div class="r" style="left:1176px;top:134px;width:2px;height:287px;background:#9a9a9a;border-radius:1px;"></div>
<div class="r" style="left:1px;top:716px;width:1184px;height:77px;background:#383838;"></div>
<div class="t" style="left:131px;top:730px;color:#ffffff;font-size:12px;letter-spacing:-0.35px;">File name:</div>
<div class="r" style="left:190px;top:725px;width:778px;height:24px;background:#383838;box-sizing:border-box;border:1px solid #9e9e9e;"></div>
<div class="r" style="left:191px;top:726px;width:762px;height:22px;overflow:hidden"><div class="t" style="left:3px;top:5px;color:#ffffff;font-size:12px;letter-spacing:-0.06px;">&quot;M97-0007OIII.fit&quot; &quot;M97-0001Ha.fit&quot; &quot;M97-0001OIII.fit&quot; &quot;M97-0001SII.fit&quot; &quot;M97-0002Ha.fit&quot; &quot;M97-0002OIII.fit&quot; &quot;M97-0002SII.fit&quot; &quot;M97-0003Ha.fit&quot;</div></div>
<svg class="r" style="left:954px;top:734px" width="11" height="7" viewBox="0 0 11 7"><path d="M1 1.5L5 5.5L9 1.5" stroke="#cfcfcf" stroke-width="1.1" fill="none"/></svg>
<div class="r" style="left:980px;top:725px;width:188px;height:23px;background:#383838;box-sizing:border-box;border:1px solid #9e9e9e;"></div>
<div class="t" style="left:984px;top:730px;color:#ffffff;font-size:12px;letter-spacing:-0.2px;">All Files (*.*)</div>
<svg class="r" style="left:1154px;top:733px" width="11" height="7" viewBox="0 0 11 7"><path d="M1 1.5L5 5.5L9 1.5" stroke="#cfcfcf" stroke-width="1.1" fill="none"/></svg>
<div class="r" style="left:981px;top:755px;width:86px;height:24px;background:#333333;box-sizing:border-box;border:1px solid #f2f2f2;border-radius:4px;"></div>
<div class="t" style="left:1009px;top:760px;color:#ffffff;font-size:12px;letter-spacing:-0.2px;">Open</div>
<div class="r" style="left:1081px;top:755px;width:86px;height:24px;background:#333333;box-sizing:border-box;border:1px solid #9a9a9a;border-radius:4px;"></div>
<div class="t" style="left:1106px;top:760px;color:#ffffff;font-size:12px;letter-spacing:-0.2px;">Cancel</div>
<div class="r" style="left:1181px;top:783px;width:2px;height:2px;background:#dadada;"></div>
<div class="r" style="left:1178px;top:786px;width:2px;height:2px;background:#dadada;"></div>
<div class="r" style="left:1181px;top:786px;width:2px;height:2px;background:#dadada;"></div>
<div class="r" style="left:1175px;top:789px;width:2px;height:2px;background:#dadada;"></div>
<div class="r" style="left:1178px;top:789px;width:2px;height:2px;background:#dadada;"></div>
<div class="r" style="left:1181px;top:789px;width:2px;height:2px;background:#dadada;"></div>
</div></body></html>
